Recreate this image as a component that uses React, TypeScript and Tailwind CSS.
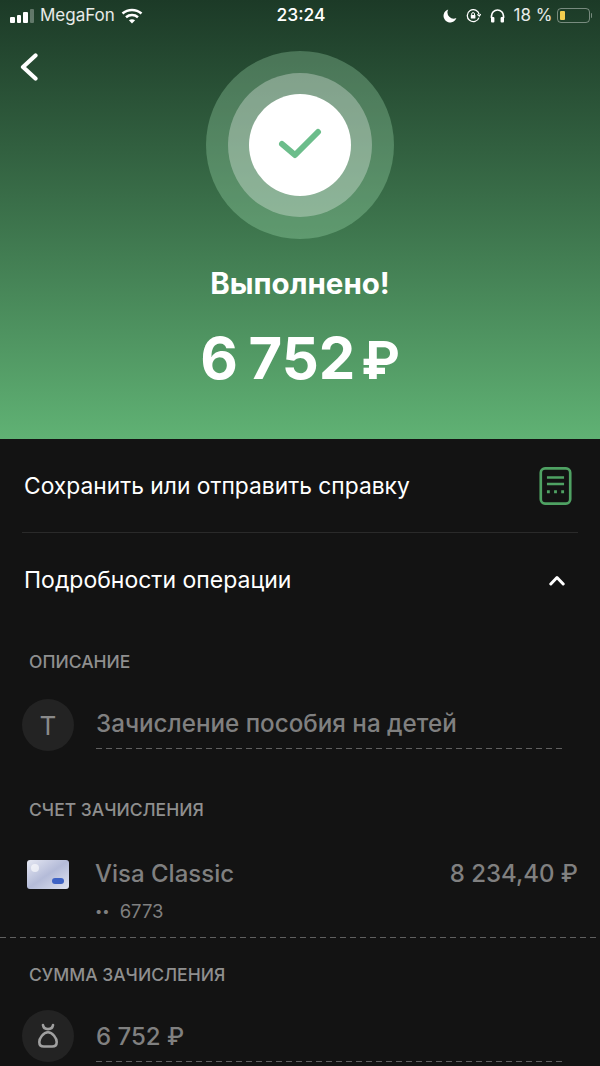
function SignalBars() {
  return (
    <div className="flex items-end gap-[2px] h-[14px]">
      <div className="w-[4.500px] h-[6px] rounded-[1px] bg-white" />
      <div className="w-[4.500px] h-[8px] rounded-[1px] bg-white" />
      <div className="w-[4.500px] h-[11px] rounded-[1px] bg-white" />
      <div className="w-[4.500px] h-[14px] rounded-[1px] bg-white/30" />
    </div>
  );
}

function Wifi() {
  return (
    <svg width="22" height="16" viewBox="0 0 22 16" fill="none" stroke="white" strokeWidth="2.6">
      <path d="M1.500 5.500C7 .8 15 .8 20.500 5.500" />
      <path d="M5 9.200c3.500-2.900 8.500-2.900 12 0" />
      <path d="M11 15.500 7.900 12.300c1.800-1.400 4.400-1.400 6.200 0z" fill="white" stroke="none" />
    </svg>
  );
}

function Moon() {
  return (
    <svg width="14" height="14" viewBox="0 0 14 14">
      <path d="M5.200.6A6.600 6.600 0 1 0 13.400 9 6.200 6.200 0 0 1 5.200.6z" fill="white" />
    </svg>
  );
}

function RotationLock() {
  return (
    <svg width="15" height="14" viewBox="0 0 15 14" fill="none" stroke="white" strokeWidth="1.300">
      <path d="M13 8.600A6 6 0 1 1 13.200 5.500" />
      <path d="M11.300 5.400l2 1.700 1.500-2" strokeWidth="1.200" />
      <rect x="4.800" y="6" width="4.600" height="3.600" rx=".6" fill="white" stroke="none" />
      <path d="M5.700 6V5a1.400 1.400 0 0 1 2.800 0v1" strokeWidth="1" />
    </svg>
  );
}

function Headphones() {
  return (
    <svg width="15" height="14" viewBox="0 0 15 14" fill="none">
      <path d="M1.500 9V7a6 6 0 0 1 12 0v2" stroke="white" strokeWidth="1.700" />
      <rect x="1" y="8" width="3.400" height="5.500" rx="1" fill="white" />
      <rect x="10.600" y="8" width="3.400" height="5.500" rx="1" fill="white" />
    </svg>
  );
}

function Battery() {
  return (
    <div className="flex items-center gap-[1px]">
      <div className="w-[33px] h-[15px] rounded-[4px] border border-white/40 p-[2px]">
        <div className="w-[5px] h-full rounded-[1px] bg-[#f3cf4e]" />
      </div>
      <div className="w-[1.500px] h-[5px] rounded-r-sm bg-white/40" />
    </div>
  );
}

function StatusBar() {
  return (
    <div className="grid grid-cols-3 items-center h-[30px] pt-[1px] pl-[10px] pr-[8px] text-white">
      <div className="flex items-center gap-[6px] text-[17px] whitespace-nowrap text-white/90">
        <SignalBars />
        <span>MegaFon</span>
        <Wifi />
      </div>
      <div className="text-center text-[17.500px] font-medium">23:24</div>
      <div className="flex items-center justify-end gap-[9px] whitespace-nowrap">
        <Moon />
        <RotationLock />
        <Headphones />
        <div className="flex items-center gap-[4px]">
          <span className="text-[17px] text-white/90">18 %</span>
          <Battery />
        </div>
      </div>
    </div>
  );
}

function BackArrow() {
  return (
    <svg className="absolute left-[20px] top-[53px]" width="18" height="28" viewBox="0 0 18 28" fill="none" stroke="white" strokeWidth="4.200" strokeLinecap="round" strokeLinejoin="round">
      <path d="M15.500 2.500 3 14l12.500 11.500" />
    </svg>
  );
}

function ChevronUpIcon() {
  return (
    <svg width="16" height="11" viewBox="0 0 16 11" fill="none" stroke="white" strokeWidth="3" strokeLinecap="round" strokeLinejoin="round">
      <path d="M1.800 9 8 2.500 14.200 9" />
    </svg>
  );
}

function ReceiptIcon() {
  return (
    <svg width="33" height="38" viewBox="0 0 34 40" fill="none" stroke="#4fa263">
      <rect x="1.500" y="1.500" width="31" height="37" rx="4.500" strokeWidth="2.800" />
      <path d="M8 11h18M8 18h18" strokeWidth="2.600" />
      <path d="M8 26h3M15.500 26h3M23 26h3" strokeWidth="3" />
    </svg>
  );
}

function BagIcon() {
  return (
    <svg width="22" height="26" viewBox="0 0 24 28" fill="none" stroke="#a0a0a0" strokeWidth="2.800" strokeLinecap="round" strokeLinejoin="round">
      <path d="M6.500 2c.5 3 2.500 4.500 5.500 4.500S17 5 17.500 2" />
      <path d="M12 10c-5 0-9.500 6.500-9.500 10.500 0 3 2 5 5 5h9c3 0 5-2 5-5C21.500 16.500 17 10 12 10z" />
    </svg>
  );
}

function CardIcon() {
  return (
    <div className="relative mt-[1px] w-[42px] h-[29px] rounded-[3px] bg-gradient-to-br from-[#e6e8f3] via-[#b4bbd8] to-[#dfe3f0]">
      <div className="absolute left-[4px] top-[4px] w-[8px] h-[8px] rounded-full bg-white/60" />
      <div className="absolute right-[5px] bottom-[5px] w-[12px] h-[6px] rounded-full bg-[#3f63c4]" />
    </div>
  );
}

function SectionLabel({ children, className }: { children: string; className: string }) {
  return (
    <div className={`pl-[29px] text-[17.500px] leading-[20px] font-medium text-[#8f8f8f] ${className}`}>
      {children}
    </div>
  );
}

function DashedLine() {
  return <div className="h-px bg-[repeating-linear-gradient(90deg,#606060_0,#606060_6px,transparent_6px,transparent_10px)]" />;
}

export default function App() {
  return (
    <div className="h-[1066px] w-[600px] overflow-hidden bg-[#131313] font-['Inter','Liberation_Sans',sans-serif]">
      {/* Green header */}
      <section className="relative h-[439px] bg-gradient-to-b from-[#1c3a27] to-[#60b274]">
        <StatusBar />
        <BackArrow />

        <div className="mt-[21px] flex justify-center">
          <div className="flex h-[188px] w-[188px] items-center justify-center rounded-full bg-[#c0ffd0]/25">
            <div className="flex h-[144px] w-[144px] items-center justify-center rounded-full bg-white/30">
              <div className="flex h-[102px] w-[102px] items-center justify-center rounded-full bg-white">
                <svg width="44" height="34" viewBox="0 0 44 34" fill="none" stroke="#6cbd8b" strokeWidth="6" strokeLinecap="round" strokeLinejoin="round">
                  <path d="M4 16l13 11L40 4" />
                </svg>
              </div>
            </div>
          </div>
        </div>

        <h1 className="mt-[26px] text-center text-[29.500px] leading-[36px] font-bold text-white">Выполнено!</h1>
        <div className="mt-[23px] flex items-baseline justify-center gap-[6px] leading-[68px] font-bold text-white">
          <span className="text-[58px] [word-spacing:-3px]">6 752</span>
          <span className="text-[52px]">₽</span>
        </div>
      </section>

      {/* Actions */}
      <div className="mx-[22px] flex h-[94px] items-center justify-between border-b border-[#2a2a2a] pt-[1px] pr-[6px] pl-[2px]">
        <span className="text-[22.800px] text-white">Сохранить или отправить справку</span>
        <ReceiptIcon />
      </div>
      <div className="flex h-[95px] items-center justify-between pl-[24px] pr-[35px]">
        <span className="text-[23px] text-white">Подробности операции</span>
        <ChevronUpIcon />
      </div>

      {/* Details */}
      <SectionLabel className="mt-[24px]">ОПИСАНИЕ</SectionLabel>
      <div className="mt-[27px] flex gap-[22px] pl-[22px] pr-[34px]">
        <div className="flex h-[52px] w-[52px] shrink-0 items-center justify-center rounded-full bg-[#232323] text-[26px] text-[#8a8a8a]">Т</div>
        <div className="flex-1">
          <div className="pt-[8px] pb-[7px] text-[24.200px] leading-[34px] font-medium whitespace-nowrap text-[#808080]">
            Зачисление пособия на детей
          </div>
          <DashedLine />
        </div>
      </div>

      <SectionLabel className="mt-[49px]">СЧЕТ ЗАЧИСЛЕНИЯ</SectionLabel>
      <div className="mt-[39px] flex pl-[27px] pr-[22px]">
        <CardIcon />
        <div className="ml-[26px] flex flex-1 flex-col">
          <div className="flex justify-between text-[24px] leading-[30px] font-medium text-[#808080]">
            <span>Visa Classic</span>
            <span>8 234,40 ₽</span>
          </div>
          <div className="mt-[10px] flex items-center gap-[10px] leading-[24px] text-[#808080]">
            <span className="text-[13px]">••</span>
            <span className="text-[18.500px]">6773</span>
          </div>
        </div>
      </div>
      <div className="mt-[14px]">
        <DashedLine />
      </div>

      <SectionLabel className="mt-[27px]">СУММА ЗАЧИСЛЕНИЯ</SectionLabel>
      <div className="mt-[25px] flex gap-[22px] pl-[22px] pr-[34px]">
        <div className="flex h-[52px] w-[52px] shrink-0 items-center justify-center rounded-full bg-[#232323]">
          <BagIcon />
        </div>
        <div className="flex-1">
          <div className="pt-[10px] pb-[7px] text-[24px] leading-[34px] font-medium text-[#808080]">6 752 ₽</div>
          <DashedLine />
        </div>
      </div>
    </div>
  );
}
